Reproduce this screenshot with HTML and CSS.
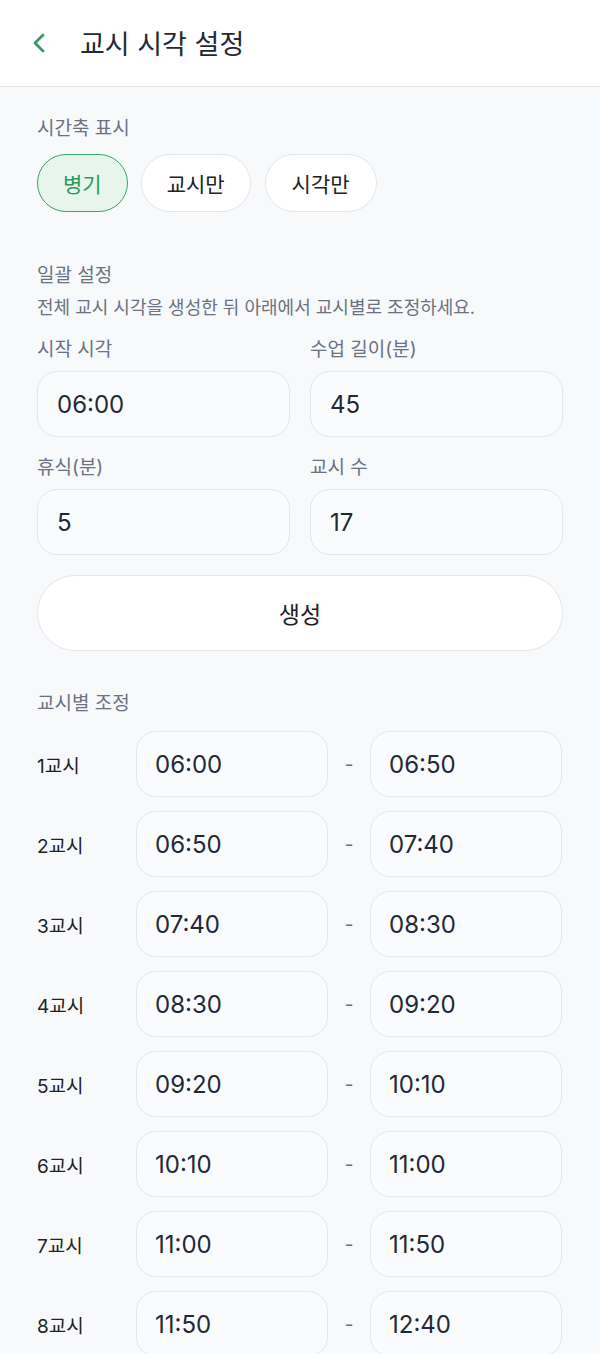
FILE: index.html
```html
<!DOCTYPE html>
<html lang="ko">
<head>
<meta charset="utf-8">
<title>교시 시각 설정</title>
<link rel="stylesheet" href="styles.css">
</head>
<body>
<header class="topbar">
  <button class="back" aria-label="뒤로">
    <svg width="18" height="24" viewBox="0 0 18 24"><path d="M13 4 L5 12 L13 20" fill="none" stroke="#3a9a62" stroke-width="2.8" stroke-linecap="round" stroke-linejoin="round"/></svg>
  </button>
  <h1 class="title">교시 시각 설정</h1>
</header>
<main class="content">
  <section class="block">
    <div class="label">시간축 표시</div>
    <div class="chips">
      <button class="chip active">병기</button>
      <button class="chip">교시만</button>
      <button class="chip">시각만</button>
    </div>
  </section>

  <section class="block batch">
    <div class="label">일괄 설정</div>
    <div class="desc">전체 교시 시각을 생성한 뒤 아래에서 교시별로 조정하세요.</div>
    <div class="grid">
      <div class="field"><div class="label">시작 시각</div><div class="input">06:00</div></div>
      <div class="field"><div class="label">수업 길이(분)</div><div class="input">45</div></div>
      <div class="field"><div class="label">휴식(분)</div><div class="input">5</div></div>
      <div class="field"><div class="label">교시 수</div><div class="input">17</div></div>
    </div>
    <button class="generate">생성</button>
  </section>

  <section class="block periods">
    <div class="label">교시별 조정</div>
    <div class="rows">
      <div class="row"><span class="pname">1교시</span><div class="tinput">06:00</div><span class="dash">-</span><div class="tinput">06:50</div></div>
      <div class="row"><span class="pname">2교시</span><div class="tinput">06:50</div><span class="dash">-</span><div class="tinput">07:40</div></div>
      <div class="row"><span class="pname">3교시</span><div class="tinput">07:40</div><span class="dash">-</span><div class="tinput">08:30</div></div>
      <div class="row"><span class="pname">4교시</span><div class="tinput">08:30</div><span class="dash">-</span><div class="tinput">09:20</div></div>
      <div class="row"><span class="pname">5교시</span><div class="tinput">09:20</div><span class="dash">-</span><div class="tinput">10:10</div></div>
      <div class="row"><span class="pname">6교시</span><div class="tinput">10:10</div><span class="dash">-</span><div class="tinput">11:00</div></div>
      <div class="row"><span class="pname">7교시</span><div class="tinput">11:00</div><span class="dash">-</span><div class="tinput">11:50</div></div>
      <div class="row"><span class="pname">8교시</span><div class="tinput">11:50</div><span class="dash">-</span><div class="tinput">12:40</div></div>
      <div class="row"><span class="pname">9교시</span><div class="tinput">12:40</div><span class="dash">-</span><div class="tinput">13:30</div></div>
      <div class="row"><span class="pname">10교시</span><div class="tinput">13:30</div><span class="dash">-</span><div class="tinput">14:20</div></div>
    </div>
  </section>
</main>
</body>
</html>
```
FILE: styles.css
```css
* { box-sizing: border-box; }
html, body { margin: 0; padding: 0; }
body {
  font-family: "Inter", "Noto Sans CJK KR", sans-serif;
  background: #f7f9fb;
  color: #1f2937;
}
.topbar {
  height: 87px;
  background: #ffffff;
  border-bottom: 1px solid #e4e9e6;
  display: flex;
  align-items: center;
  padding: 0 30px;
  gap: 32px;
}
.back {
  background: none;
  border: 0;
  padding: 0;
  display: flex;
  align-items: center;
}
.title {
  margin: 3px 0 0;
  font-size: 27px;
  line-height: 36px;
  font-weight: 400;
  color: #1f2937;
}
.content {
  padding: 29px 37px 40px;
}
.label {
  font-size: 19px;
  line-height: 26px;
  color: #6b7280;
}
.chips {
  display: flex;
  gap: 13px;
  margin-top: 12px;
}
.chip {
  height: 58px;
  padding: 0 25px;
  border-radius: 999px;
  border: 1px solid #e3e6ea;
  background: #ffffff;
  font-family: inherit;
  font-size: 21px;
  color: #222;
}
.chip:nth-child(3) { margin-left: 1px; padding: 0 26px; }
.chip.active {
  background: #e7f5ec;
  border-color: #3da366;
  color: #2e9a57;
  border-width: 1.5px;
  padding: 0 25px;
}
.batch { margin-top: 51px; }
.desc {
  font-size: 18px;
  line-height: 24px;
  color: #6b7280;
  margin-top: 7px;
}
.grid {
  display: grid;
  grid-template-columns: 1fr 1fr;
  column-gap: 20px;
  row-gap: 18px;
  margin-top: 17px;
}
.field .label { margin-bottom: 8px; }
.input, .tinput {
  height: 66px;
  border: 1px solid #e3e6ea;
  border-radius: 20px;
  background: #fafbfc;
  display: flex;
  align-items: center;
  padding: 0 19px;
  font-size: 24px;
  color: #1f2937;
}
.generate {
  display: block;
  width: 100%;
  height: 76px;
  margin-top: 20px;
  border-radius: 999px;
  border: 1px solid #e3e6ea;
  background: #ffffff;
  font-family: inherit;
  font-size: 23px;
  color: #222;
}
.periods { margin-top: 40px; }
.rows {
  display: flex;
  flex-direction: column;
  gap: 14px;
  margin-top: 14px;
}
.row {
  display: grid;
  grid-template-columns: 99px 192px 42px 192px;
  align-items: center;
}
.pname {
  font-size: 19px;
  color: #222;
}
.tinput { font-size: 24px; padding: 0 18px; }
.dash {
  text-align: center;
  color: #6b7280;
  font-size: 19px;
}
```
